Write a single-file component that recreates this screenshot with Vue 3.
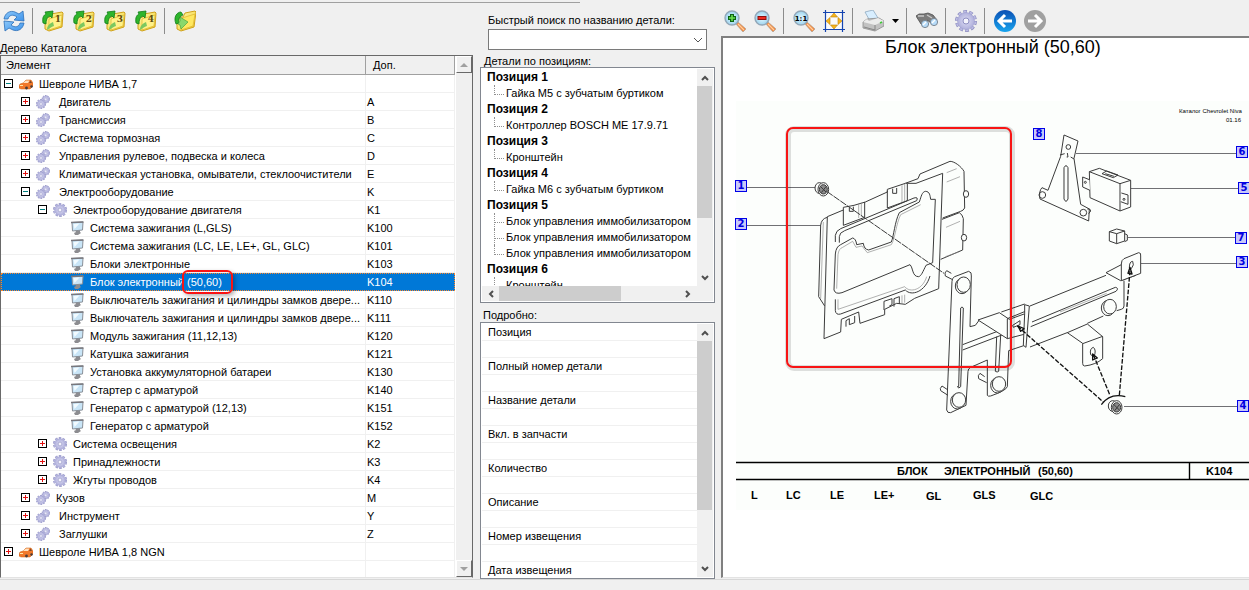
<script setup>
import { ref } from 'vue'

const tree = [
  { level: 0, toggle: '-', icon: 'car', name: 'Шевроле НИВА 1,7', code: '' },
  { level: 1, toggle: '+', icon: 'gears', name: ' Двигатель', code: 'A' },
  { level: 1, toggle: '+', icon: 'gears', name: ' Трансмиссия', code: 'B' },
  { level: 1, toggle: '+', icon: 'gears', name: ' Система тормозная', code: 'C' },
  { level: 1, toggle: '+', icon: 'gears', name: ' Управления рулевое, подвеска и колеса', code: 'D' },
  { level: 1, toggle: '+', icon: 'gears', name: ' Климатическая установка, омыватели, стеклоочистители', code: 'E' },
  { level: 1, toggle: '-', icon: 'gears', name: ' Электрооборудование', code: 'K' },
  { level: 2, toggle: '-', icon: 'gear', name: 'Электрооборудование двигателя', code: 'K1' },
  { level: 3, icon: 'screen', name: 'Система зажигания (L,GLS)', code: 'K100' },
  { level: 3, icon: 'screen', name: 'Система зажигания (LC, LE, LE+, GL, GLC)', code: 'K101' },
  { level: 3, icon: 'screen', name: 'Блоки электронные', code: 'K103' },
  { level: 3, icon: 'screen', name: 'Блок электронный ', mark: '(50,60)', code: 'K104' },
  { level: 3, icon: 'screen', name: 'Выключатель зажигания и цилиндры замков двере...', code: 'K110' },
  { level: 3, icon: 'screen', name: 'Выключатель зажигания и цилиндры замков двере...', code: 'K111' },
  { level: 3, icon: 'screen', name: 'Модуль зажигания (11,12,13)', code: 'K120' },
  { level: 3, icon: 'screen', name: 'Катушка зажигания', code: 'K121' },
  { level: 3, icon: 'screen', name: 'Установка аккумуляторной батареи', code: 'K130' },
  { level: 3, icon: 'screen', name: 'Стартер с арматурой', code: 'K140' },
  { level: 3, icon: 'screen', name: 'Генератор с арматурой (12,13)', code: 'K151' },
  { level: 3, icon: 'screen', name: 'Генератор с арматурой', code: 'K152' },
  { level: 2, toggle: '+', icon: 'gear', name: 'Система освещения', code: 'K2' },
  { level: 2, toggle: '+', icon: 'gear', name: 'Принадлежности', code: 'K3' },
  { level: 2, toggle: '+', icon: 'gear', name: 'Жгуты проводов', code: 'K4' },
  { level: 1, toggle: '+', icon: 'gears', name: 'Кузов', code: 'M' },
  { level: 1, toggle: '+', icon: 'gears', name: ' Инструмент', code: 'Y' },
  { level: 1, toggle: '+', icon: 'gears', name: ' Заглушки', code: 'Z' },
  { level: 0, toggle: '+', icon: 'car', name: 'Шевроле НИВА 1,8 NGN', code: '' }
]
const selected = ref('K104')

const positions = [
  { title: 'Позиция 1', parts: ['Гайка М5 с зубчатым буртиком'] },
  { title: 'Позиция 2', parts: ['Контроллер BOSCH ME 17.9.71'] },
  { title: 'Позиция 3', parts: ['Кронштейн'] },
  { title: 'Позиция 4', parts: ['Гайка М6 с зубчатым буртиком'] },
  { title: 'Позиция 5', parts: ['Блок управления иммобилизатором', 'Блок управления иммобилизатором', 'Блок управления иммобилизатором'] },
  { title: 'Позиция 6', parts: ['Кронштейн'] }
]

const details = ['Позиция', 'Полный номер детали', 'Название детали', 'Вкл. в запчасти', 'Количество', 'Описание', 'Номер извещения', 'Дата извещения']

// callout pins, in drawing coordinates
const pins = [
  { n: 1, x: -1, y: 79 },
  { n: 2, x: -1, y: 117 },
  { n: 3, x: 500, y: 155 },
  { n: 4, x: 501, y: 299 },
  { n: 5, x: 502, y: 81 },
  { n: 6, x: 500, y: 45 },
  { n: 7, x: 499, y: 131 },
  { n: 8, x: 297, y: 27 }
]

const folders = [1, 2, 3, 4]
</script>

<template>
  <svg class="defs" aria-hidden="true">
    <defs>
      <linearGradient id="g-blue" x1="0" y1="0" x2="1" y2="1">
        <stop offset="0" stop-color="#8cc8fa" /><stop offset="1" stop-color="#3c92ea" />
      </linearGradient>
      <linearGradient id="g-folder" x1="0" y1="0" x2="1" y2="1">
        <stop offset="0" stop-color="#fffbb0" /><stop offset="1" stop-color="#f2ca28" />
      </linearGradient>
      <radialGradient id="g-lens">
        <stop offset="0" stop-color="#e6f9ff" /><stop offset="1" stop-color="#9cd3ee" />
      </radialGradient>
      <radialGradient id="g-gear">
        <stop offset="0" stop-color="#dedef4" /><stop offset="1" stop-color="#b0b0dc" />
      </radialGradient>
      <linearGradient id="g-back" x1="0" y1="0" x2="0" y2="1">
        <stop offset="0" stop-color="#0c50b4" /><stop offset="1" stop-color="#18a4ee" />
      </linearGradient>

      <symbol id="i-folder" viewBox="0 0 22 22">
        <path d="M3 8l3-1 2 0 1-3 11-2 1 1-1 14-13 4-4-2z" fill="url(#g-folder)" stroke="#d0a21a" />
        <path d="M7 9l13-4-1 11-12 4z" fill="#fff28a" stroke="#dcb42c" stroke-width=".7" />
        <path d="M1 13C0 7 2 5 4 4L3 2l8-1-1 7-2-2C5 7 4 10 4 14z" fill="#2eb52c" stroke="#117c19" stroke-width=".8" />
        <path d="M5 20c0-4 2-6 6-8l1 4c-3 1-4 2-7 4z" fill="#7cc860" />
      </symbol>
      <symbol id="i-folder-out" viewBox="0 0 22 22">
        <path d="M3 8l3-1 3 0 2-4 10-2 1 1-2 15-13 4-4-2z" fill="url(#g-folder)" stroke="#d0a21a" />
        <path d="M8 8l13-4-2 12-12 4z" fill="#ffe860" stroke="#dcb42c" stroke-width=".7" />
        <path d="M2 14C-1 7 3 2 7 2l2 3C6 6 4 9 5 13z" fill="#2eb52c" stroke="#117c19" stroke-width=".8" />
        <path d="M6 7l8 5-7 7-1-4-2-1 2-3z" fill="#8ad86c" stroke="#3b9c36" stroke-width=".6" />
      </symbol>
      <symbol id="i-lens" viewBox="0 0 22 22">
        <path d="M12 14l2-2 8 7-3 3z" fill="#f7883a" stroke="#a9a098" stroke-width=".7" />
        <path d="M14 14l6 6" stroke="#ffd0a2" stroke-width="1.2" />
        <circle cx="8" cy="8" r="7" fill="url(#g-lens)" stroke="#93a7b8" stroke-width="1.4" />
      </symbol>
      <symbol id="i-gear" viewBox="0 0 22 22">
        <circle cx="11" cy="11" r="9.400" fill="none" stroke="#9090c2" stroke-width="3.200" stroke-dasharray="3.700 2.206" />
        <circle cx="11" cy="11" r="9.300" fill="none" stroke="#bcbce4" stroke-width="2" stroke-dasharray="2.500 3.343" stroke-dashoffset="-.6" />
        <circle cx="11" cy="11" r="8.500" fill="url(#g-gear)" stroke="#a0a0d0" stroke-width=".6" />
        <circle cx="11" cy="11" r="3" fill="#f4f4fc" stroke="#8f8fc2" />
      </symbol>
      <symbol id="i-gears" viewBox="0 0 14 14">
        <use href="#i-gear" x="5.500" y="0" width="8.500" height="8.500" />
        <use href="#i-gear" x="0" y="4" width="10" height="10" />
      </symbol>
      <symbol id="i-car" viewBox="0 0 14 14">
        <path d="M0 9l1-2 3-1 3-3h5l2 3v3l-3 3H2L0 11z" fill="#f2792a" stroke="#c45c10" stroke-width=".5" />
        <path d="M4 6l3-2.500h3.500L9 6z" fill="#ffe2c0" />
        <path d="M10 6l1.500-2.500L13 6z" fill="#7c4a2c" />
        <path d="M1 8.500h3" stroke="#ffe9a8" />
        <circle cx="7.500" cy="11" r="1.400" fill="#4a3c38" /><circle cx="12.500" cy="9.500" r="1.200" fill="#4a3c38" />
      </symbol>
      <symbol id="i-screen" viewBox="0 0 14 14">
        <path d="M5 9h5v2l1 1-3 2H5l-1-2 2-1z" fill="#8c8c90" />
        <path d="M2 1.500l11-.5-.5 8-10 1z" fill="#c9e5f7" stroke="#8a9098" />
        <path d="M3.500 3l6-.5-5 5.500z" fill="#f2fbff" />
        <path d="M1 1.500L13.500 1" stroke="#77777d" stroke-width="1.400" />
      </symbol>
    </defs>
  </svg>

  <div class="app">
    <div class="main">
      <!-- catalogue tree -->
      <section class="pane tree-pane">
        <div class="toolbar left">
          <button class="tool" aria-label="Обновить">
            <svg viewBox="0 0 22 22">
              <path d="M1 9C2 3 7 0 12 2l4 2 4-3 1 10-10-1 3-3c-4-3-8-2-9 2z" fill="url(#g-blue)" stroke="#2c6fb8" stroke-width=".8" />
              <path d="M21 13c-1 6-6 9-11 7l-4-2-4 3-1-10 10 1-3 3c4 3 8 2 9-2z" fill="url(#g-blue)" stroke="#2c6fb8" stroke-width=".8" />
            </svg>
          </button>
          <i class="sep"></i>
          <button v-for="n in folders" :key="n" class="tool" :aria-label="'Уровень ' + n">
            <svg viewBox="0 0 22 22">
              <use href="#i-folder" />
              <text x="16" y="12" class="folder-num">{{ n }}</text>
            </svg>
          </button>
          <i class="sep"></i>
          <button class="tool" aria-label="Свернуть">
            <svg viewBox="0 0 22 22"><use href="#i-folder-out" /></svg>
          </button>
        </div>
        <div class="caption">Дерево Каталога</div>
        <div class="sunken tree-box">
          <div class="tree-view">
            <table class="tree">
              <colgroup><col /><col class="code-col" /></colgroup>
              <thead>
                <tr><th>Элемент</th><th>Доп.</th></tr>
              </thead>
              <tbody>
                <tr v-for="(row, i) in tree" :key="i" :class="{ selected: row.code === selected }" @click="selected = row.code">
                  <td>
                    <div class="node" :class="'level-' + row.level">
                      <button v-if="row.toggle" class="toggle" :class="{ minus: row.toggle === '-' }" aria-label="Развернуть"></button>
                      <svg class="node-icon" viewBox="0 0 14 14"><use :href="'#i-' + row.icon" /></svg>
                      <span class="node-name">{{ row.name }}<span v-if="row.mark" class="mark">{{ row.mark }}</span></span>
                    </div>
                  </td>
                  <td>{{ row.code }}</td>
                </tr>
                <tr class="rest"><td></td><td></td></tr>
              </tbody>
            </table>
          </div>
          <div class="classic-scroll">
            <button class="classic-btn" aria-label="Вверх"><svg viewBox="0 0 8 4"><path d="M0 4l4-4 4 4z" /></svg></button>
            <button class="classic-btn" aria-label="Вниз"><svg viewBox="0 0 8 4"><path d="M0 0l4 4 4-4z" /></svg></button>
          </div>
        </div>
      </section>

      <!-- search, parts and details -->
      <section class="pane parts-pane">
        <label class="search-label" for="search">Быстрый поиск по названию детали:</label>
        <div class="combo">
          <select id="search"><option></option></select>
          <svg viewBox="0 0 10 6"><path d="M1 1l4 4 4-4" /></svg>
        </div>
        <div class="caption parts-caption">Детали по позициям:</div>
        <div class="box parts-box">
          <div class="parts-body">
            <div class="parts-list">
              <template v-for="p in positions" :key="p.title">
                <div class="pos">{{ p.title }}</div>
                <ul>
                  <li v-for="(part, i) in p.parts" :key="i">{{ part }}</li>
                </ul>
              </template>
            </div>
            <div class="vscroll">
              <button aria-label="Вверх"><svg viewBox="0 0 8 6"><path d="M1 5l3-3 3 3" /></svg></button>
              <div class="track"><div class="thumb parts-thumb"></div></div>
              <button aria-label="Вниз"><svg viewBox="0 0 8 6"><path d="M1 1l3 3 3-3" /></svg></button>
            </div>
          </div>
          <div class="hscroll">
            <button aria-label="Влево"><svg viewBox="0 0 8 8"><path d="M6 1L3 4l3 3" /></svg></button>
            <div class="track"><div class="thumb"></div></div>
            <button aria-label="Вправо"><svg viewBox="0 0 8 8"><path d="M2 1l3 3-3 3" /></svg></button>
          </div>
        </div>
        <div class="caption details-caption">Подробно:</div>
        <div class="box details-box">
          <dl>
            <template v-for="d in details" :key="d">
              <dt>{{ d }}</dt>
              <dd></dd>
            </template>
          </dl>
          <div class="vscroll">
            <button aria-label="Вверх"><svg viewBox="0 0 8 6"><path d="M1 5l3-3 3 3" /></svg></button>
            <div class="track"><div class="thumb details-thumb"></div></div>
            <button aria-label="Вниз"><svg viewBox="0 0 8 6"><path d="M1 1l3 3 3-3" /></svg></button>
          </div>
        </div>
      </section>

      <!-- drawing -->
      <section class="pane view-pane">
        <div class="toolbar right">
          <button class="tool" aria-label="Увеличить">
            <svg viewBox="0 0 22 22"><use href="#i-lens" /><path d="M8 4v8M4 8h8" stroke="#0c6414" stroke-width="4" /><path d="M8 5v6M5 8h6" stroke="#6be04c" stroke-width="1.600" /></svg>
          </button>
          <button class="tool" aria-label="Уменьшить">
            <svg viewBox="0 0 22 22"><use href="#i-lens" /><path d="M3.500 8h9" stroke="#8e1010" stroke-width="4" /><path d="M4.500 8h7" stroke="#f02c20" stroke-width="2" /></svg>
          </button>
          <i class="sep"></i>
          <button class="tool" aria-label="Масштаб 1:1">
            <svg viewBox="0 0 22 22"><use href="#i-lens" /><text x="8" y="11" class="scale-num">1:1</text></svg>
          </button>
          <button class="tool" aria-label="По размеру окна">
            <svg viewBox="0 0 22 22">
              <path d="M3 3h16v16H3z" fill="#fafafa" />
              <path d="M2.500 0v22M19.500 0v22M0 2.500h22M0 19.500h22" stroke="#1444b0" stroke-width="1.200" />
              <path d="M11 3l3.500 4h-7zM11 19l3.500-4h-7zM3 11l4-3.500v7zM19 11l-4-3.500v7z" fill="#f8b61c" stroke="#b87e08" stroke-width=".6" />
            </svg>
          </button>
          <i class="sep"></i>
          <button class="tool" aria-label="Печать">
            <svg viewBox="0 0 22 22">
              <path d="M3 2l8-2 5 8-8 3z" fill="#d8eeff" stroke="#8ea9c0" stroke-width=".8" />
              <path d="M1 12l4-3 12-1 5 3v5l-9 5-12-3z" fill="#c2c2c2" stroke="#8c8c8c" stroke-width=".8" />
              <path d="M1 12l4-3 2 2 9-3 6 3-9 4z" fill="#ececec" />
              <path d="M2 17l11 3v-5" stroke="#777" stroke-width=".8" fill="none" />
              <path d="M18 13l2-1" stroke="#3ecb35" stroke-width="1.500" />
            </svg>
          </button>
          <svg class="caret" viewBox="0 0 7 4"><path d="M0 0h7L3.500 4z" /></svg>
          <i class="sep"></i>
          <button class="tool" aria-label="Найти">
            <svg viewBox="0 0 22 22">
              <path d="M0 6l3-2 5 0 4-1 5 2 4 5-6 3-4-3-1 3-5 1z" fill="#7c7c7c" stroke="#4c4c4c" stroke-width=".8" />
              <path d="M2 6l6 0M11 5l5 3" stroke="#c8c8c8" stroke-width="1.400" />
              <circle cx="9" cy="14" r="3.600" fill="#b7dcfa" stroke="#7c8894" />
              <circle cx="18" cy="12" r="3.600" fill="#b7dcfa" stroke="#7c8894" />
              <path d="M7 15l3-3M16 13l3-3" stroke="#fff" stroke-width="1.400" />
            </svg>
          </button>
          <i class="sep"></i>
          <button class="tool" aria-label="Настройки">
            <svg viewBox="0 0 22 22"><use href="#i-gear" /></svg>
          </button>
          <i class="sep"></i>
          <button class="tool" aria-label="Назад">
            <svg viewBox="0 0 22 22"><circle cx="11" cy="11" r="11" fill="url(#g-back)" /><path d="M18 11H6M11 5l-6 6 6 6" class="arrow" /></svg>
          </button>
          <button class="tool" aria-label="Вперёд">
            <svg viewBox="0 0 22 22"><circle cx="11" cy="11" r="11" fill="#a0a0a0" /><path d="M4 11h12M11 5l6 6-6 6" class="arrow" /></svg>
          </button>
        </div>
        <div class="sunken view-box">
          <h1>Блок электронный (50,60)</h1>
          <div class="drawing">
            <svg class="sketch" width="513" height="409" viewBox="736 101 513 409">
              <!-- leader lines -->
              <g stroke="#707074" fill="none">
                <path d="M747 187.500h69M747 225.500h74M1076 153.500h160M1131 188.500h107M1128 237.500h107M1141 263.500h95M1124 406.500h113" />
              </g>
              <!-- electronic unit -->
              <g class="ink" transform="translate(780 120) scale(.33333)">
                <path d="M376 190l38-14 6-14 90-38c14 0 34 16 42 30l2 110q-4 8-12 10l-54 20" />
                <path d="M486 298l52-20q10 6 12 18l-2 94-66 28" />
                <path d="M500 186l40-16M500 158l30-12M498 322l42-18M496 410l40-14" class="thin" />
                <ellipse cx="558" cy="222" rx="8" ry="10" class="fill" /><ellipse cx="552" cy="353" rx="8" ry="10" class="fill" />
                <path d="M142 292q-18 4-20 24l-6 214 18 28" />
                <path d="M130 306l-8 230" class="thin" />
                <path d="M142 290L190 270V262L222 256L256 246L322 216V208L376 190L408 190L488 160L476 506L404 535L376 553L350 550L314 568V584L240 610L236 576L184 598L182 636L132 656Z" class="fill" />
                <path d="M190 270v46l64-24v-46M208 262v12h12v-14M322 212v52l60-22v-50M338 206v14h12v-16" />
                <path d="M198 620v-18l10-6v18l16-6v-20M312 570v-26l24-8v18l-8 4M342 560v-24l16-6v22" />
                <path d="M236 250v44M244 248v42M366 196v50M374 192v52M366 526v26M374 524v24" class="thin" />
                <path d="M166 366v-20q2-14 16-20l220-92q14-4 8 8l-216 90q-16 6-16 18v18" />
                <path d="M162 510l4-108q2-22 16-28l36-20q10 2 12 20l20-4q2 18 16 20l68-24c8-20 10-60 24-88l60-32c6-18 8-30 18-32 14 0 14 14 16 24h14l-8 190-20 8c-10 20-14 32-22 34-20 0-16-26-26-36L186 518q-20 6-24-8z" />
                <path d="M170 506l4-102q2-18 14-22l30-18 10 18 18-4 16 20 72-24c12-20 14-62 28-90l60-30" class="thin" />
                <path d="M166 538v34q2 14 16 10l194-72c18 20 60 6 74-42" />
                <path d="M174 538v30l200-68c16 20 54 10 66-30" class="thin" />
                <!-- flanged nut -->
                <g id="nut">
                  <ellipse cx="118" cy="204" rx="13" ry="16" class="fill" />
                  <ellipse cx="130" cy="208" rx="16" ry="20" class="fill" />
                  <ellipse cx="130" cy="208" rx="12" ry="14" fill="#8b8b8b" />
                  <path d="M122 200l16 16M138 200l-14 18" />
                </g>
                <path d="M140 214L492 460" stroke-dasharray="22 3" />
              </g>
              <!-- bracket -->
              <g class="ink" transform="translate(930 240) scale(.33333)">
                <path d="M64 100l-14-8q-8 6-4 16l20 10M164 410l-14-10q-8 6-4 16l24 12M54 450l-18-12q-8 8-4 14l22 14" />
                <path d="M66 124q0-10 8-14l42-16q10 2 8 14l-4 152 16-4 12-16" />
                <path d="M66 124l-16 386q2 10 12 8l46-22 6-102q0-8 8-12l50-22v106q2 4 10 2 46-16 50-28l4-108 48-16M300 321l114-44M520 228l-48 22M560 212l14-4q8-2 8-10v-76" />
                <path d="M214 216l70-24M300 198l228-92" />
                <path d="M98 314l120-46M98 330l136-52" />
                <path d="M86 440l6-236q4-6 8 0l-8 236q-6 8-10 0zM200 290l-4 104q6 4 10 0l6-108" />
                <path d="M144 240l64-22 30 20 50-18-2 62-54 14z" class="fill" />
                <path d="M232 236v60M232 236l54-22" />
                <path d="M284 194l14 4-10 124-8-6 4-96z" class="fill" />
                <path d="M306 246l250-104q12 2 2 12l-256 106" />
                <path d="M390 216l140-56" class="thin" />
                <ellipse cx="96" cy="138" rx="20" ry="23" class="fill" /><ellipse cx="101" cy="134" rx="20" ry="23" class="fill" />
                <ellipse cx="202" cy="436" rx="20" ry="23" class="fill" /><ellipse cx="207" cy="432" rx="20" ry="22" class="fill" />
                <ellipse cx="82" cy="484" rx="20" ry="23" class="fill" /><ellipse cx="87" cy="480" rx="20" ry="22" class="fill" />
                <ellipse cx="534" cy="204" rx="20" ry="23" class="fill" /><ellipse cx="540" cy="200" rx="19" ry="22" class="fill" />
                <path d="M574 74l-46 24 44 24 46-16" class="fill" />
                <path d="M574 122V72q0-12 8-16l44-18q8 0 6 10v52z" class="fill" />
                <path d="M598 84q0-20 10-20 6 10-4 22z" />
                <path d="M412 278l60-26 46 38v66q-20 18-54 22-6 0-6-8v-60z" class="fill" />
                <path d="M458 311l60-22" />
                <path d="M482 344q-4-18 8-22 10 8 2 28zM248 256l22-14v12l-20 8z" />
                <path d="M600 92l-32 374M490 344l50 122M262 258l258 228" class="dash" />
                <path d="M514 494q26-36 72-24M594 100l6-18 6 20zM488 360l0-18 14 12zM282 266l-18-8 8 16z" class="heavy" />
                <use href="#nut" x="430" y="294" />
              </g>
              <!-- bracket 6, unit 5 and relay 7 -->
              <g class="ink" transform="translate(1010 95) scale(.33333)">
                <path d="M162 120l42 18-12 52 20 138 26 14-2 36L90 312q-4-24 6-34l18 8 38-102z" />
                <path d="M150 180l14-4M170 186h4l-2-12M182 186l10 6M162 312v-94q6-12 12 0v94q-6 14-12 0z" />
                <circle cx="175" cy="156" r="7" /><circle cx="97" cy="300" r="10" /><circle cx="220" cy="353" r="10" />
                <path d="M232 342q10-2 10 6l-6 8" />
                <path d="M238 230l30-10 94 36v80l-32 12-90-40z" class="fill" />
                <path d="M238 230l92 36 32-10M330 266v82M276 236l14-8 34 12-14 8zM286 236l26 8" />
                <path d="M238 254l-20-8v30l22 10" class="fill" />
                <path d="M334 294l20 6v28l-22-8" class="fill" />
                <circle cx="226" cy="262" r="3" /><circle cx="342" cy="313" r="3" />
                <path d="M298 410l22-8 24 6v30l-24 8-22-8zM298 410l22 6 24-8M320 416v30M344 416l8 4v16l-8 4" />
              </g>
              <!-- title block -->
              <path d="M736 462.500h513M736 479.500h513M1189.500 462v18" stroke="#000" stroke-width="1.400" />
              <g class="note">
                <text x="1179" y="113">Каталог Chevrolet Niva</text>
                <text x="1226" y="122">01.16</text>
              </g>
              <g class="title">
                <text x="897" y="475">БЛОК</text>
                <text x="944" y="475">ЭЛЕКТРОННЫЙ</text>
                <text x="1038" y="475">(50,60)</text>
                <text x="1206" y="475">K104</text>
                <text x="751" y="499">L</text>
                <text x="786" y="499">LC</text>
                <text x="830" y="499">LE</text>
                <text x="874" y="499">LE+</text>
                <text x="926" y="500">GL</text>
                <text x="973" y="499">GLS</text>
                <text x="1030" y="500">GLC</text>
              </g>
              <rect x="788" y="129" width="224" height="239" rx="6" class="frame-shadow" />
              <rect x="787" y="128" width="224" height="239" rx="6" class="frame" />
            </svg>
            <button v-for="p in pins" :key="p.n" class="pin" :style="{ left: p.x + 'px', top: p.y + 'px' }">{{ p.n }}</button>
          </div>
        </div>
      </section>
    </div>
    <footer class="status"></footer>
  </div>
</template>

<style>
body { background: #f0f0f0; }
</style>

<style scoped>
* { box-sizing: border-box; }
.defs { position: absolute; width: 0; height: 0; }
button { padding: 0; border: 0; background: none; font: inherit; }
svg { display: block; }

.app {
  display: flex;
  flex-direction: column;
  height: 100vh;
  overflow: hidden;
  background: #f0f0f0;
  color: #000;
  font: 11px/14px "Liberation Sans", Arial, sans-serif;
}
.app::before { content: ""; width: 580px; height: 2px; border-bottom: 1px solid #a0a0a0; flex-shrink: 0; }
.main { flex: 1; display: flex; min-height: 0; }
.pane { display: flex; flex-direction: column; min-width: 0; min-height: 0; }
.status { height: 11px; border-top: 1px solid #d7d7d7; flex-shrink: 0; }
.caption { white-space: nowrap; }

/* TOOLBARS */
.toolbar { display: flex; align-items: center; flex-shrink: 0; }
.toolbar.left { height: 36px; padding-left: 3px; gap: 9px; }
.toolbar.right { height: 33px; padding: 2px 0 0 3px; gap: 8px; }
.tool { width: 22px; height: 22px; flex-shrink: 0; }
.tool svg { width: 22px; height: 22px; }
.sep { width: 1px; height: 26px; background: #8c8c8c; flex-shrink: 0; }
.left .sep { margin-left: -2px; }
.right .sep { margin: 0 1px 0 -1px; }
.caret { width: 7px; height: 4px; }
.folder-num { font: bold 9px "DejaVu Serif", serif; fill: #5f4a10; text-anchor: middle; }
.scale-num { font: bold 7px "DejaVu Sans", sans-serif; text-anchor: middle; }
.arrow { fill: none; stroke: #fff; stroke-width: 3; }

/* TREE */
.tree-pane { flex: 0 1 474px; }
.tree-pane .caption { height: 16px; padding-top: 2px; }
.sunken { border: 1px solid #696969; border-right-color: #fff; border-bottom-color: #e3e3e3; background: #fff; flex: 1; min-height: 0; }
.tree-box { display: flex; gap: 1px; border-right-color: #696969; margin: 0 1px 1px 0; }
.tree-view { flex: 1; min-width: 0; overflow: hidden; }
.tree { width: 100%; height: 100%; table-layout: fixed; border-collapse: separate; border-spacing: 0; }
.code-col { width: 89px; }
.tree th { height: 19px; padding: 0 5px; background: #f0f0f0; border-right: 1px solid #a0a0a0; border-bottom: 1px solid #a0a0a0; font-weight: normal; text-align: left; }
.tree th + th { padding-left: 7px; }
.tree td { height: 18px; padding: 0; border-bottom: 1px solid #f0f0f0; border-right: 1px solid #f0f0f0; white-space: nowrap; }
.tree td + td { padding-left: 1px; }
.rest td { height: auto; border-bottom: 0; }
.selected { outline: 1px dotted #ff8728; outline-offset: -1px; }
.selected td { background: #0078d7; color: #fff; border-color: #0078d7; }
.node { display: flex; align-items: center; gap: 6px; height: 17px; padding-left: 3px; }
.level-1 { padding-left: 20px; }
.level-2 { padding-left: 37px; }
.level-3 { padding-left: 69px; }
.toggle { width: 9px; height: 9px; border: 1px solid #000; background: linear-gradient(#e01010, #e01010) center / 5px 1px no-repeat, linear-gradient(#e01010, #e01010) center / 1px 5px no-repeat, #fff; }
.toggle.minus { background: linear-gradient(#008080, #008080) center / 5px 1px no-repeat, #fff; }
.node-icon { width: 14px; height: 14px; flex-shrink: 0; }
.node-name { white-space: pre; }
.mark { position: relative; }
.mark::after { content: ""; position: absolute; inset: -6px -11px -6px -5px; border: 2px solid #f81414; border-radius: 6px; box-shadow: 2px 2px 4px rgba(0, 0, 0, 0.3); }
.classic-scroll { width: 16px; display: flex; flex-direction: column; justify-content: space-between; background: #f0f0f0; flex-shrink: 0; }
.classic-btn { height: 17px; display: grid; place-items: center; background: #f0f0f0; border: 1px solid; border-color: #fff #696969 #696969 #fff; }
.classic-btn svg { width: 8px; height: 4px; fill: #a0a0a0; }

/* PARTS */
.parts-pane { flex: 0 0 247px; padding: 10px 6px 0 6px; }
.search-label { padding-left: 8px; height: 17px; }
.combo { position: relative; margin: 0 8px; }
.combo select { display: block; width: 100%; height: 21px; border: 1px solid #7a7a7a; border-radius: 0; background: #fff; appearance: none; }
.combo svg { position: absolute; right: 4px; top: 8px; width: 10px; height: 6px; pointer-events: none; }
.combo path { fill: none; stroke: #555; }
.parts-caption { padding: 3px 0 0 4px; height: 17px; }
.details-caption { padding: 5px 0 0 3px; height: 19px; }
.box { border: 1px solid #828790; background: #fff; }
.parts-box { flex: 0 1 236px; padding: 1px; min-height: 0; }
.parts-body { display: flex; height: 217px; }
.parts-list { flex: 1; min-width: 0; overflow: hidden; padding-left: 5px; line-height: 16px; white-space: nowrap; }
.pos { font-weight: bold; font-size: 12px; }
.parts-list ul { margin: 0; padding: 0 0 0 7px; list-style: none; }
.parts-list li { position: relative; padding-left: 12px; }
.parts-list li::before { content: ""; position: absolute; left: 0; top: 0; width: 9px; height: 9px; border: dotted #909090; border-width: 0 0 1px 1px; }
.parts-list li:not(:last-child)::after { content: ""; position: absolute; left: 0; top: 9px; height: 7px; border-left: 1px dotted #909090; }
.vscroll { width: 16px; display: flex; flex-direction: column; background: #f0f0f0; flex-shrink: 0; }
.vscroll button { height: 17px; display: grid; place-items: center; }
.vscroll svg { width: 8px; height: 6px; }
.vscroll path, .hscroll path { fill: none; stroke: #505050; stroke-width: 2; }
.track { flex: 1; }
.thumb { background: #cdcdcd; width: 15px; }
.parts-thumb { height: 72%; }
.details-thumb { height: 77%; }
.hscroll { display: flex; height: 15px; padding-right: 17px; background: #f0f0f0; }
.hscroll button { width: 17px; display: grid; place-items: center; }
.hscroll svg { width: 8px; height: 8px; }
.hscroll .thumb { width: 68%; height: 15px; }
.details-box { flex: 1; min-height: 0; display: flex; padding: 1px; overflow: hidden; }
.details-box dl { flex: 1; margin: 0; overflow: hidden; }
.details-box dt, .details-box dd { height: 17px; margin: 0; padding: 1px 0 0 6px; border-bottom: 1px solid #f0f0f0; }
.search-label, .parts-caption { margin-bottom: -1px; }
.combo { margin-bottom: 1px; }

/* DRAWING */
.view-pane { flex: 1; }
.view-box { border-width: 2px 0 1px 2px; border-top-color: #808080; border-left-color: #808080; overflow: hidden; margin-bottom: 1px; }
h1 { margin: 0; padding-left: 14px; height: 63px; font: 18px/18px "Liberation Sans", Arial, sans-serif; text-align: center; }
.drawing { position: relative; margin-left: 13px; background: #fcfefc; }
.ink { fill: none; stroke: #3a3a3a; stroke-width: 3; stroke-linejoin: round; }
.ink .fill { fill: #fcfefc; }
.thin { stroke: #8a8a8a; stroke-width: 2; }
.dash { stroke: #111; stroke-width: 4; stroke-dasharray: 14 5; }
.heavy { stroke: #111; stroke-width: 4; }
.note { font: 6px "Liberation Sans", Arial, sans-serif; }
.title { font: bold 11px "Liberation Sans", Arial, sans-serif; }
.frame { fill: none; stroke: #f81414; stroke-width: 2; }
.frame-shadow { fill: none; stroke: #000; stroke-opacity: 0.12; stroke-width: 6; }
.pin { position: absolute; width: 12px; height: 12px; border: 1px solid #0000e8; background: #c8c8fa; color: #0000e0; font: bold 10px/10px "DejaVu Sans", sans-serif; }
</style>
